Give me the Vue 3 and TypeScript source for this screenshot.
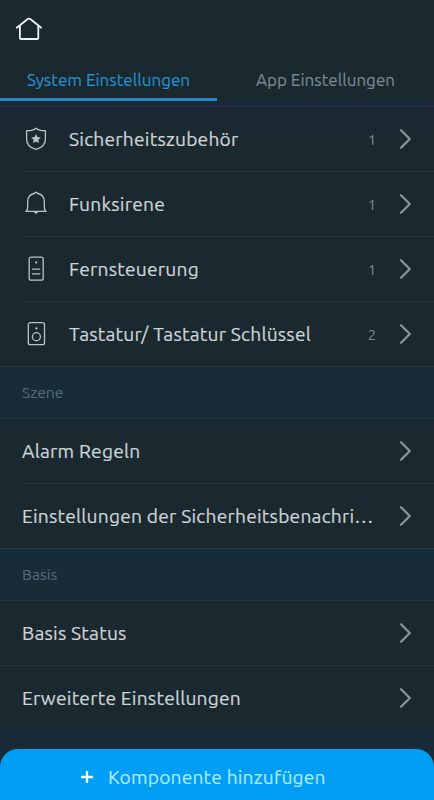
<script setup lang="ts">
import { ref } from 'vue'

type IconName = 'shield' | 'bell' | 'remote' | 'keypad'

interface Item {
  label: string
  icon?: IconName
  count?: number
}

interface Section {
  title?: string
  inset?: boolean
  items: Item[]
}

const tabs: string[] = ['System Einstellungen', 'App Einstellungen']
const activeTab = ref(0)

const sections: Section[] = [
  {
    inset: true,
    items: [
      { label: 'Sicherheitszubehör', icon: 'shield', count: 1 },
      { label: 'Funksirene', icon: 'bell', count: 1 },
      { label: 'Fernsteuerung', icon: 'remote', count: 1 },
      { label: 'Tastatur/ Tastatur Schlüssel', icon: 'keypad', count: 2 },
    ],
  },
  {
    title: 'Szene',
    inset: true,
    items: [{ label: 'Alarm Regeln' }, { label: 'Einstellungen der Sicherheitsbenachri…' }],
  },
  {
    title: 'Basis',
    items: [{ label: 'Basis Status' }, { label: 'Erweiterte Einstellungen' }],
  },
]
</script>

<template>
  <div class="screen">
    <header class="header">
      <svg class="home" viewBox="0 0 28 24" width="28" height="24">
        <path d="M1.8 10.7 L12.4 2.2 Q14 1.1 15.6 2.2 L26.2 10.7 M4.9 8.8 V21 Q4.9 22 5.9 22 H22.3 Q23.3 22 23.3 21 V8.8" />
      </svg>
    </header>
    <nav class="tabs">
      <button
        v-for="(tab, i) in tabs"
        :key="tab"
        class="tab"
        :class="{ active: i === activeTab }"
        @click="activeTab = i"
      >
        <span>{{ tab }}</span>
      </button>
    </nav>
    <main class="list">
      <section v-for="(section, s) in sections" :key="s">
        <h2 v-if="section.title" class="section-title">{{ section.title }}</h2>
        <ul class="rows" :class="{ inset: section.inset, first: s === 0 }">
          <li v-for="item in section.items" :key="item.label" class="row">
            <svg v-if="item.icon" class="icon" viewBox="0 0 28 28" width="28" height="28">
              <template v-if="item.icon === 'shield'">
                <path d="M14 3.2 C12 5 8.2 5.8 4.6 5.7 V14 C4.6 19.4 8.8 23.1 14 24.4 C19.2 23.1 23.4 19.4 23.4 14 V5.7 C19.8 5.8 16 5 14 3.2 Z" />
                <path class="solid" d="M14 9 L15.4 12.1 L18.8 12.5 L16.3 14.8 L17 18.1 L14 16.4 L11 18.1 L11.7 14.8 L9.2 12.5 L12.6 12.1 Z" />
              </template>
              <template v-else-if="item.icon === 'bell'">
                <path d="M4 21.4 C5.8 20.4 5.7 18.5 5.7 16 V11.6 C5.7 7.3 8.2 4.3 12.2 3.5 Q14 1 15.8 3.5 C19.8 4.3 22.3 7.3 22.3 11.6 V16 C22.3 18.5 22.2 20.4 24 21.4 Z" />
                <path class="solid" d="M12 22 H16 Q15.6 23.8 14 23.8 Q12.4 23.8 12 22 Z" />
              </template>
              <template v-else-if="item.icon === 'remote'">
                <rect x="7.2" y="2.2" width="14" height="23" rx="2" />
                <circle class="solid" cx="14.2" cy="7.4" r="1.1" />
                <path d="M10.6 14.1 H17.8 M10.6 18.8 H17.8" />
              </template>
              <template v-else>
                <rect x="6.3" y="2.7" width="16.2" height="22" rx="2" />
                <circle class="solid" cx="14.4" cy="8.4" r="1.1" />
                <circle cx="14.4" cy="16.7" r="4" />
              </template>
            </svg>
            <span class="label">{{ item.label }}</span>
            <span v-if="item.count" class="count">{{ item.count }}</span>
            <svg class="chevron" viewBox="0 0 14 22" width="14" height="22">
              <path d="M3 2.2 L11.8 11 L3 19.8" />
            </svg>
          </li>
        </ul>
      </section>
    </main>
    <button class="add">
      <svg class="plus" viewBox="0 0 14 14" width="14" height="14">
        <path d="M7 1 V13 M1 7 H13" />
      </svg>
      <span>Komponente hinzufügen</span>
    </button>
  </div>
</template>

<style>
body {
  margin: 0;
  background: #182c37;
}
</style>

<style scoped>
.screen {
  display: flex;
  flex-direction: column;
  box-sizing: border-box;
  height: 800px;
  overflow: hidden;
  background: #182c37;
  font-family: Ubuntu, 'Noto Sans', sans-serif;
  color: #ced4d7;
}

svg {
  flex: none;
  fill: none;
  stroke-linecap: round;
  stroke-linejoin: round;
}

button {
  border: 0;
  padding: 0;
  font: inherit;
}

.header {
  height: 57px;
  box-sizing: border-box;
  padding: 17px 15px 0;
  background: #1a2930;
}

.home {
  display: block;
  stroke: #edf3f5;
  stroke-width: 1.8;
}

.tabs {
  display: flex;
  height: 50px;
  box-sizing: border-box;
  border-bottom: 1px solid #25333f;
  background: linear-gradient(#1a2930 43px, #1a293b 46px);
}

.tab {
  flex: 1;
  height: 44px;
  box-sizing: border-box;
  border-bottom: 3px solid transparent;
  background: none;
  color: #798990;
  font-size: 17.05px;
  line-height: 45px;
  -webkit-text-stroke: 0.15px currentColor;
}

.tab span {
  display: block;
  height: 41px;
}

.tab.active {
  border-color: #248bc8;
  color: #2790cc;
}

.list {
  flex: 1;
}

.rows {
  margin: 0;
  padding: 0;
  list-style: none;
  background: #1a2930;
}

.rows.first {
  background: linear-gradient(#1a2733, #1a2930 32px);
}

.row {
  display: flex;
  align-items: center;
  height: 65px;
  box-sizing: border-box;
  padding: 0 22px;
}

.row + .row {
  border-top: 1px solid #26363d;
}

.row:first-child {
  height: 64px;
}

.inset .row + .row {
  margin-left: 22px;
  padding-left: 0;
}

.icon {
  margin-right: 19px;
  stroke: #b8c5ca;
  stroke-width: 1.3;
}

.solid {
  fill: #b8c5ca;
  stroke: none;
}

.label {
  flex: 1;
  font-size: 19.2px;
  letter-spacing: 0.22px;
  white-space: nowrap;
  -webkit-text-stroke: 0.2px currentColor;
}

.count {
  width: 12px;
  margin-right: 20px;
  color: #7d8b92;
  font-size: 15px;
  text-align: center;
}

.chevron {
  stroke: #87949b;
  stroke-width: 2.3;
}

.section-title {
  height: 53px;
  box-sizing: border-box;
  margin: 0;
  padding-left: 22px;
  border-top: 1px solid #26363d;
  border-bottom: 1px solid #26363d;
  color: #536a77;
  font-size: 15.6px;
  font-weight: 400;
  line-height: 51px;
  -webkit-text-stroke: 0.15px currentColor;
}

.add {
  display: flex;
  flex: none;
  align-items: center;
  gap: 14px;
  height: 51px;
  padding: 5px 0 0 80px;
  box-sizing: border-box;
  border-radius: 18px 18px 0 0;
  background: #009df5;
  color: #aeeaff;
  font-size: 19.2px;
  letter-spacing: 0.18px;
  white-space: nowrap;
  -webkit-text-stroke: 0.15px currentColor;
}

.plus {
  stroke: #f2fdff;
  stroke-width: 2.3;
  stroke-linecap: butt;
}
</style>
